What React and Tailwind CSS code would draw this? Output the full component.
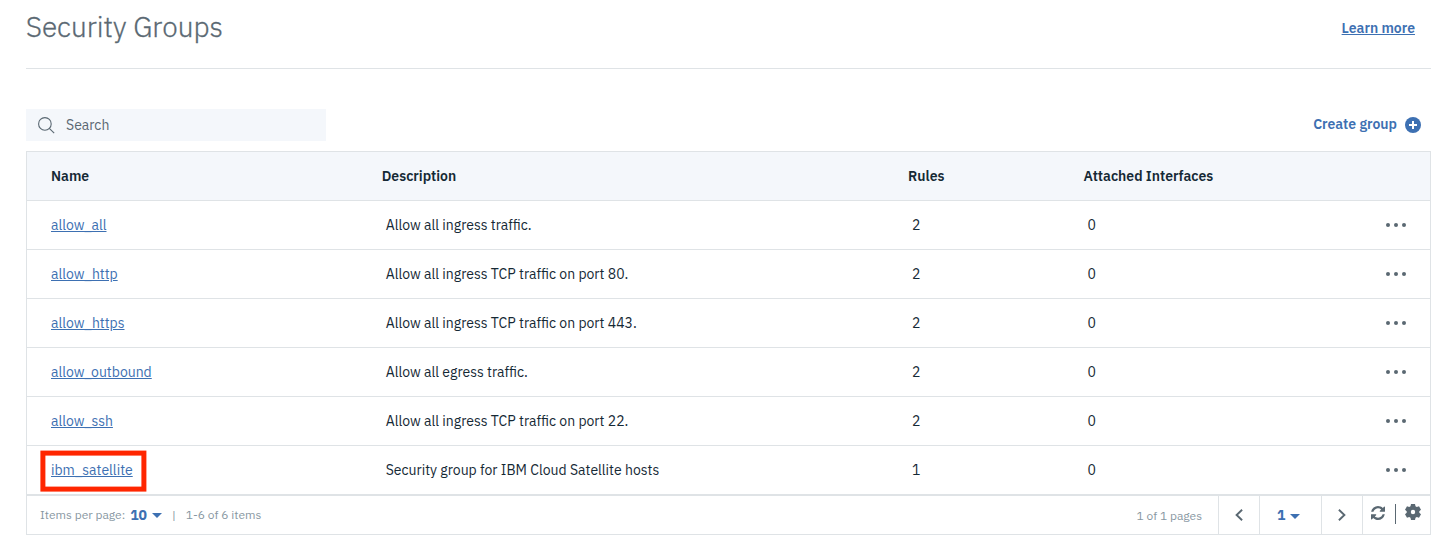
import React from 'react';

const rows = [
  { name: 'allow_all', description: 'Allow all ingress traffic.', rules: 2, interfaces: 0 },
  { name: 'allow_http', description: 'Allow all ingress TCP traffic on port 80.', rules: 2, interfaces: 0 },
  { name: 'allow_https', description: 'Allow all ingress TCP traffic on port 443.', rules: 2, interfaces: 0 },
  { name: 'allow_outbound', description: 'Allow all egress traffic.', rules: 2, interfaces: 0 },
  { name: 'allow_ssh', description: 'Allow all ingress TCP traffic on port 22.', rules: 2, interfaces: 0 },
  { name: 'ibm_satellite', description: 'Security group for IBM Cloud Satellite hosts', rules: 1, interfaces: 0, highlighted: true },
];

const columns = 'grid grid-cols-[330.700px_526.300px_175.500px_1fr_44px] items-center pl-6';

function SearchIcon() {
  return (
    <svg width="17" height="17" viewBox="0 0 17 17" fill="none" stroke="#5a6872" strokeWidth="1.1">
      <circle cx="6.9" cy="6.900" r="6.300" />
      <path d="M11.3 11.300 16.200 16.200" />
    </svg>
  );
}

function AddIcon() {
  return (
    <svg width="16" height="16" viewBox="0 0 16 16">
      <circle cx="8" cy="8" r="8" fill="#3d70b2" />
      <path d="M8 4v8M4 8h8" stroke="#fff" strokeWidth="2" />
    </svg>
  );
}

function OverflowIcon() {
  return (
    <svg width="20" height="4" viewBox="0 0 20 4" fill="#5a6872">
      <circle cx="2" cy="2" r="2" />
      <circle cx="10" cy="2" r="2" />
      <circle cx="18" cy="2" r="2" />
    </svg>
  );
}

function CaretDown() {
  return (
    <svg width="10" height="5" viewBox="0 0 10 5">
      <path d="M0 0h10L5 5z" fill="#3d70b2" />
    </svg>
  );
}

function Chevron({ flipped }) {
  return (
    <svg width="8" height="12" viewBox="0 0 8 12" className={flipped ? 'rotate-180' : ''} fill="none" stroke="#5a6872" strokeWidth="1.9">
      <path d="M7.1.8 1.6 6l5.5 5.2" />
    </svg>
  );
}

function RefreshIcon() {
  return (
    <svg width="14" height="14" viewBox="0 0 1536 1536" fill="#5a6872">
      <path d="M1511 928q0 5-1 7-64 268-268 434.500T764 1536q-146 0-282.500-55T238 1324l-129 129q-19 19-45 19t-45-19-19-45V960q0-26 19-45t45-19h448q26 0 45 19t19 45-19 45l-137 137q71 66 161 102t187 36q134 0 250-65t186-179q11-17 53-117 8-23 30-23h192q13 0 22.500 9.500t9.500 22.500zm25-800v448q0 26-19 45t-45 19h-448q-26 0-45-19t-19-45 19-45l138-138Q969 256 768 256q-134 0-250 65T332 500q-11 17-53 117-8 23-30 23H50q-13 0-22.500-9.500T18 608v-7q65-268 270-434.500T768 0q146 0 284 55.500T1297 212l130-129q19-19 45-19t45 19 19 45z" />
    </svg>
  );
}

function GearIcon() {
  return (
    <svg width="16" height="16" viewBox="0 0 16 16" fill="#5a6872">
      <path
        fillRule="evenodd"
        d="M6 0h4l.5 2.300 1.300.75 2.200-.75 2 3.400-1.700 1.600v1.400L16 10.300l-2 3.400-2.200-.75-1.300.75L10 16H6l-.5-2.300-1.300-.75-2.200.75-2-3.400 1.700-1.600V7.300L0 5.700l2-3.400 2.200.75 1.300-.75zM8 5.800a2.200 2.200 0 1 0 0 4.400 2.200 2.200 0 0 0 0-4.400z"
      />
    </svg>
  );
}

export default function App() {
  return (
    <main className="h-[542px] w-[1442px] bg-white pl-[26px] pr-[11px] font-['IBM_Plex_Sans',Roboto,sans-serif] text-sm text-[#152935]">
      <header className="flex h-[69px] items-start justify-between border-b border-[#dfe3e6] pr-4">
        <h1 className="pt-[9px] text-[28px] leading-9 font-light text-[#5a6872] [-webkit-text-stroke:0.3px_#5a6872]">Security Groups</h1>
        <a href="#" className="pt-[18px] leading-5 font-semibold text-[#3d70b2] underline">Learn more</a>
      </header>

      <div className="mt-10 flex h-8 items-center justify-between">
        <label className="flex h-8 w-[300px] items-center gap-3 bg-[#f4f7fb] pl-3 text-[#5a6872]">
          <SearchIcon />
          <span className="-ml-px">Search</span>
        </label>
        <button className="flex items-center gap-2 pr-[10px] font-semibold text-[#3d70b2]">
          <span className="-mt-0.5">Create group</span>
          <AddIcon />
        </button>
      </div>

      <section className="mt-[10px] border border-[#dfe3e6]">
        <div className={`${columns} h-12 bg-[#f4f7fb] font-semibold`}>
          <span>Name</span>
          <span>Description</span>
          <span>Rules</span>
          <span>Attached Interfaces</span>
        </div>

        {rows.map((row) => (
          <div key={row.name} className={`${columns} h-[49px] border-t border-[#dfe3e6]`}>
            <div className="relative">
              <a href="#" className="text-[#3d70b2] underline">{row.name}</a>
              {row.highlighted && (
                <svg className="absolute -top-[10px] -left-[11px]" width="108" height="43" viewBox="0 0 108 43" fill="none">
                  <rect x="2.900" y="3.100" width="101" height="36" stroke="#ff2600" strokeWidth="5" />
                </svg>
              )}
            </div>
            <span className="pl-1">{row.description}</span>
            <span className="pl-1">{row.rules}</span>
            <span className="pl-1">{row.interfaces}</span>
            <OverflowIcon />
          </div>
        ))}

        <footer className="flex h-10 items-stretch border-t-2 border-[#dfe3e6] text-xs text-[#8897a2]">
          <div className="flex flex-1 items-center pl-[13px]">
            <span>Items per page:</span>
            <span className="ml-[5px] mr-[5px] text-sm font-bold text-[#3d70b2]">10</span>
            <CaretDown />
            <span className="ml-[10px]">|</span>
            <span className="ml-[10px]">1-6 of 6 items</span>
          </div>
          <span className="mr-4 self-center pt-px">1 of 1 pages</span>
          <div className="flex w-[41px] items-center justify-center border-l border-[#dfe3e6] pb-px">
            <Chevron />
          </div>
          <div className="flex w-[62px] items-center gap-[5px] border-l border-[#dfe3e6] pl-[17px]">
            <span className="text-sm font-bold text-[#3d70b2]">1</span>
            <span className="pt-0.5"><CaretDown /></span>
          </div>
          <div className="flex w-[41px] items-center justify-center border-l border-[#dfe3e6] pb-px">
            <Chevron flipped />
          </div>
          <div className="flex w-[68px] items-start border-l border-[#dfe3e6] pl-2">
            <span className="mt-[10px]"><RefreshIcon /></span>
            <span className="mt-2 ml-[10px] h-5 w-px bg-[#5a6872]" />
            <span className="mt-2 ml-[9px]"><GearIcon /></span>
          </div>
        </footer>
      </section>
    </main>
  );
}
